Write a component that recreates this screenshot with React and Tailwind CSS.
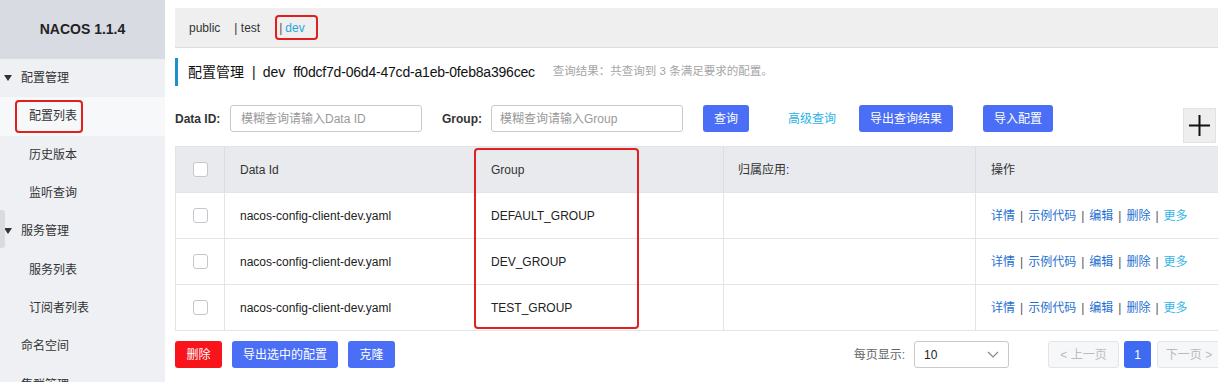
import React from 'react';

const font = { fontFamily: '"Liberation Sans", "Noto Sans CJK SC", sans-serif' };

const menu = [
  { label: '配置管理', top: true, open: true },
  { label: '配置列表', active: true },
  { label: '历史版本' },
  { label: '监听查询' },
  { label: '服务管理', top: true, open: true, handle: true },
  { label: '服务列表' },
  { label: '订阅者列表' },
  { label: '命名空间', top: true },
  { label: '集群管理', top: true, open: true },
];

const rows = [
  { id: 'nacos-config-client-dev.yaml', group: 'DEFAULT_GROUP' },
  { id: 'nacos-config-client-dev.yaml', group: 'DEV_GROUP' },
  { id: 'nacos-config-client-dev.yaml', group: 'TEST_GROUP' },
];

const Caret = () => (
  <svg width="8" height="6" viewBox="0 0 8 6" className="mr-[9px]">
    <path d="M0 0h8L4 6z" fill="#333" />
  </svg>
);

const Sidebar = () => (
  <div className="w-[165px] shrink-0 h-[382px] bg-[#eef0f3] overflow-hidden">
    <div className="h-[59px] bg-[#d8dce2] flex items-center justify-center text-[14px] font-bold text-[#222]">
      NACOS 1.1.4
    </div>
    {menu.map((m, i) => (
      <div
        key={i}
        className={
          'relative h-[38.3px] flex items-center text-[12px] text-[#333] ' +
          (m.active ? 'bg-[#f7f8fa] ' : '') +
          (m.top ? 'pl-[4px]' : 'pl-[29px]')
        }
      >
        {m.handle && <div className="absolute left-0 top-[-2px] w-[5px] h-[38px] bg-[#d8dbe0] rounded-r-[3px]" />}
        {m.top && (m.open ? <Caret /> : <span className="w-[17px]" />)}
        {m.active ? (
          <span className="ml-[-14px] pl-[12px] pr-[4px] h-[33px] flex items-center border-2 border-[#e02020] rounded-[4px]">{m.label}</span>
        ) : (
          <span>{m.label}</span>
        )}
      </div>
    ))}
  </div>
);

const Btn = ({ children, w, red }) => (
  <button
    className={
      'h-[27px] rounded-[3px] text-white text-[12px] flex items-center justify-center ' +
      (red ? 'bg-[#f7141a] ' : 'bg-[#4a6ef5] ') +
      w
    }
  >
    {children}
  </button>
);

const Check = () => <div className="w-[15px] h-[15px] border border-[#c4c6cc] rounded-[3px] bg-white" />;

const Sep = () => <span className="mx-[5px] text-[#555]">|</span>;

const Actions = () => (
  <div className="flex items-center text-[12px] text-[#1f6fd1]">
    <span>详情</span>
    <Sep />
    <span>示例代码</span>
    <Sep />
    <span>编辑</span>
    <Sep />
    <span>删除</span>
    <Sep />
    <span className="text-[#33b5e5]">更多</span>
  </div>
);

const cols = 'grid grid-cols-[49px_250px_249px_252px_1fr]';

export default function App() {
  return (
    <div className="flex w-[1218px] h-[382px] bg-white overflow-hidden" style={font}>
      <Sidebar />
      <div className="flex-1 pl-[10px] flex flex-col">
        <div className="mt-[8px] h-[40px] bg-[#efefef] border-b border-[#dcdcdc] flex items-center pl-[14px] text-[12px] text-[#333]">
          <span>public</span>
          <span className="ml-[14px]">| test</span>
          <span className="ml-[15px] h-[25px] pl-[2px] pr-[11px] flex items-center border-2 border-[#e02020] rounded-[4px]">
            <span className="text-[#555]">|</span>
            <span className="ml-[3px] text-[#2aa6d9]">dev</span>
          </span>
        </div>

        <div className="mt-[10px] h-[28px] flex items-center text-[14px] text-[#111]">
          <div className="w-[3px] h-[28px] bg-[#1b8fd0]" />
          <span className="ml-[10px]">配置管理</span>
          <span className="ml-[8px]">|</span>
          <span className="ml-[7px]">dev</span>
          <span className="ml-[8px] tracking-[-0.2px]">ff0dcf7d-06d4-47cd-a1eb-0feb8a396cec</span>
          <span className="ml-[18px] text-[11.5px] text-[#a5a5a5]">查询结果：共查询到 3 条满足要求的配置。</span>
        </div>

        <div className="mt-[19px] flex items-center h-[27px]">
          <span className="text-[12px] font-bold text-[#333] w-[55px]">Data ID:</span>
          <div className="w-[192px] h-[27px] border border-[#c9c9c9] rounded-[3px] flex items-center px-[10px] text-[12px] text-[#999]">
            模糊查询请输入Data ID
          </div>
          <span className="ml-[20px] text-[12px] font-bold text-[#333] w-[49px]">Group:</span>
          <div className="w-[192px] h-[27px] border border-[#c9c9c9] rounded-[3px] flex items-center px-[8px] text-[12px] text-[#999]">
            模糊查询请输入Group
          </div>
          <div className="ml-[20px]"><Btn w="w-[46px]">查询</Btn></div>
          <span className="ml-[39px] text-[12px] text-[#2bb4e8]">高级查询</span>
          <div className="ml-[23px]"><Btn w="w-[94px]">导出查询结果</Btn></div>
          <div className="ml-[30px]"><Btn w="w-[70px]">导入配置</Btn></div>
          <div className="ml-auto mr-[2px] self-start mt-[3px] shrink-0 w-[33px] h-[35px] bg-[#eeeeee] border border-[#e2e2e2] flex items-center justify-center">
            <svg width="21" height="21" viewBox="0 0 21 21">
              <path d="M10.5 0v21M0 10.5h21" stroke="#111" strokeWidth="2" />
            </svg>
          </div>
        </div>

        <div className="relative mt-[14px] border border-[#e4e4e4] border-r-0">
          <div className={cols + ' h-[45px] bg-[#e8eaee] text-[12px] text-[#333] items-center'}>
            <div className="h-full flex items-center justify-center border-r border-[#dcdde1]"><Check /></div>
            <div className="pl-[15px]">Data Id</div>
            <div className="pl-[16px] h-full flex items-center border-r border-[#dcdde1]">Group</div>
            <div className="pl-[14px] h-full flex items-center border-r border-[#dcdde1]">归属应用:</div>
            <div className="pl-[15px]">操作</div>
          </div>
          {rows.map((r, i) => (
            <div key={i} className={cols + ' h-[46px] border-t border-[#e4e4e4] text-[12px] text-[#222] items-center'}>
              <div className="h-full flex items-center justify-center border-r border-[#e4e4e4]"><Check /></div>
              <div className="pl-[15px]">{r.id}</div>
              <div className="pl-[16px] h-full flex items-center border-r border-[#e4e4e4]">{r.group}</div>
              <div className="h-full border-r border-[#e4e4e4]" />
              <div className="pl-[15px]"><Actions /></div>
            </div>
          ))}
          <div className="absolute left-[298px] top-[1px] w-[165px] h-[181px] border-2 border-[#e02020] rounded-[4px]" />
        </div>

        <div className="mt-[10px] flex items-center h-[27px]">
          <Btn red w="w-[47px]">删除</Btn>
          <div className="ml-[10px]"><Btn w="w-[106px]">导出选中的配置</Btn></div>
          <div className="ml-[10px]"><Btn w="w-[47px]">克隆</Btn></div>
          <span className="ml-auto text-[12px] text-[#666]">每页显示:</span>
          <div className="ml-[9px] w-[95px] h-[27px] border border-[#c9c9c9] rounded-[3px] flex items-center justify-between px-[9px] text-[12px] text-[#222]">
            <span>10</span>
            <svg width="12" height="8" viewBox="0 0 12 8"><path d="M1 1l5 5 5-5" stroke="#888" strokeWidth="1.2" fill="none" /></svg>
          </div>
          <div className="ml-[39px] w-[71px] h-[27px] border border-[#e3e4e8] bg-[#f6f7f9] rounded-[3px] flex items-center justify-center text-[12px] text-[#bbb]">
            &lt; 上一页
          </div>
          <div className="ml-[5px] w-[27px] h-[27px] bg-[#3e6bf2] rounded-[3px] flex items-center justify-center text-[12px] text-white">1</div>
          <div className="ml-[6px] w-[64px] h-[27px] border border-[#e3e4e8] bg-[#f6f7f9] rounded-[3px] flex items-center justify-center text-[12px] text-[#bbb] mr-[-3px]">
            下一页 &gt;
          </div>
        </div>
      </div>
    </div>
  );
}
